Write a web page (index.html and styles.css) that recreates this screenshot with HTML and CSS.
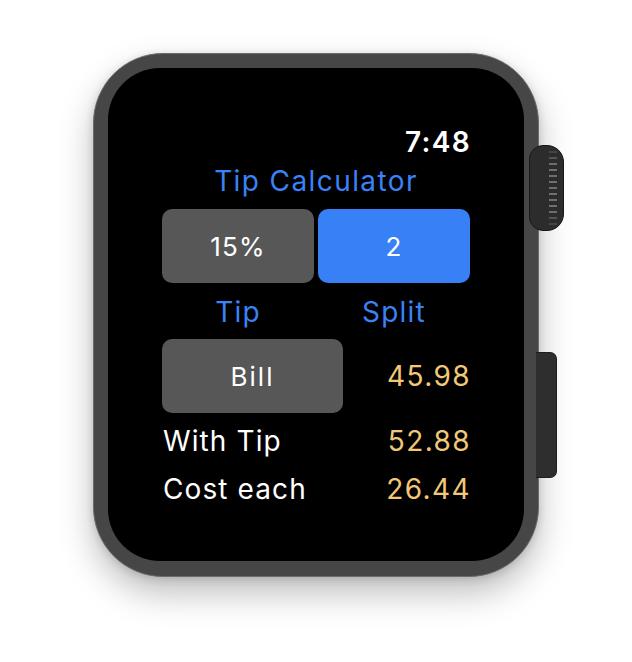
FILE: index.html
```html
<!DOCTYPE html>
<html>
<head>
<meta charset="utf-8">
<link rel="stylesheet" href="styles.css">
</head>
<body>
<div class="stage">
  <div class="watch">
    <div class="crown">
      <div class="ridges">
        <span></span><span></span><span></span><span></span><span></span><span></span><span></span><span></span><span></span><span></span><span></span><span></span><span></span>
      </div>
    </div>
    <div class="side-button"></div>
    <div class="screen">
      <div class="time">7:48</div>
      <div class="title">Tip Calculator</div>
      <div class="pair">
        <div class="btn grey">15%</div>
        <div class="btn blue">2</div>
      </div>
      <div class="pair labels">
        <div class="label">Tip</div>
        <div class="label">Split</div>
      </div>
      <div class="row bill-row">
        <div class="btn grey bill">Bill</div>
        <div class="value">45.98</div>
      </div>
      <div class="row text-row first">
        <div class="name">With Tip</div>
        <div class="value">52.88</div>
      </div>
      <div class="row text-row second">
        <div class="name">Cost each</div>
        <div class="value">26.44</div>
      </div>
    </div>
  </div>
</div>
</body>
</html>
```

FILE: styles.css
```css
* { box-sizing: border-box; }
html, body {
  margin: 0;
  padding: 0;
  background: #ffffff;
  width: 632px;
  height: 662px;
  overflow: hidden;
}
.stage {
  padding: 53px 0 0 93px;
  display: flex;
}
.watch {
  position: relative;
  width: 446px;
  height: 524px;
  border-radius: 70px;
  background: #464646;
  padding: 15px;
  border: 1px solid #6c6c6c;
  box-shadow: 0 16px 34px rgba(0, 0, 0, 0.26), 0 2px 8px rgba(0, 0, 0, 0.14);
}
.screen {
  width: 416px;
  height: 493px;
  margin: -1px;
  background: #000;
  border-radius: 52px;
  padding: 56px 54px 0 54px;
  display: flex;
  flex-direction: column;
  font-family: "Inter", "Roboto", sans-serif;
  font-size: 28px;
  letter-spacing: 1.2px;
  color: #fff;
}
.crown {
  position: absolute;
  left: 435px;
  top: 91px;
  width: 35px;
  height: 86px;
  border-radius: 14px 17px 17px 14px;
  background: #2c2c2c;
  border: 1.5px solid #181818;
  display: flex;
  justify-content: flex-end;
  padding: 5px 6px 5px 0;
}
.ridges {
  width: 8px;
  display: flex;
  flex-direction: column;
  justify-content: space-between;
}
.ridges span {
  display: block;
  height: 2px;
  background: #6e6e6e;
}
.ridges span:first-child, .ridges span:last-child { background: #444; }
.ridges span:nth-child(2), .ridges span:nth-child(12) { background: #555; }
.side-button {
  position: absolute;
  left: 442px;
  top: 298px;
  width: 21px;
  height: 126px;
  background: #2e2e2e;
  border-radius: 0 7px 7px 0;
  border: 1px solid #1e1e1e;
  border-left: none;
}
.time {
  height: 36px;
  line-height: 36px;
  text-align: right;
  font-weight: 600;
  font-size: 28px;
  letter-spacing: 1.3px;
  margin-right: -1px;
}
.title {
  margin-top: 3px;
  height: 36px;
  line-height: 36px;
  text-align: center;
  color: #3b82f6;
  letter-spacing: 1.4px;
}
.pair {
  display: grid;
  grid-template-columns: 152px 152px;
  gap: 4px;
  margin-top: 10px;
}
.btn {
  height: 74px;
  border-radius: 10px;
  display: flex;
  align-items: center;
  justify-content: center;
  font-size: 26px;
  letter-spacing: 1.2px;
  color: #fff;
}
.grey { background: #575757; }
.blue { background: #3880f6; }
.labels { margin-top: 11px; }
.label {
  height: 36px;
  line-height: 36px;
  text-align: center;
  color: #3b82f6;
}
.row {
  display: flex;
  align-items: center;
  justify-content: space-between;
}
.bill-row { margin-top: 9px; }
.bill { width: 181px; letter-spacing: 2px; }
.value {
  color: #f2c878;
  letter-spacing: 1.4px;
  margin-right: -1px;
}
.text-row {
  height: 36px;
  line-height: 36px;
}
.text-row.first { margin-top: 10px; }
.text-row.second { margin-top: 12px; }
.name { padding-left: 1px; letter-spacing: 1.1px; }
```
